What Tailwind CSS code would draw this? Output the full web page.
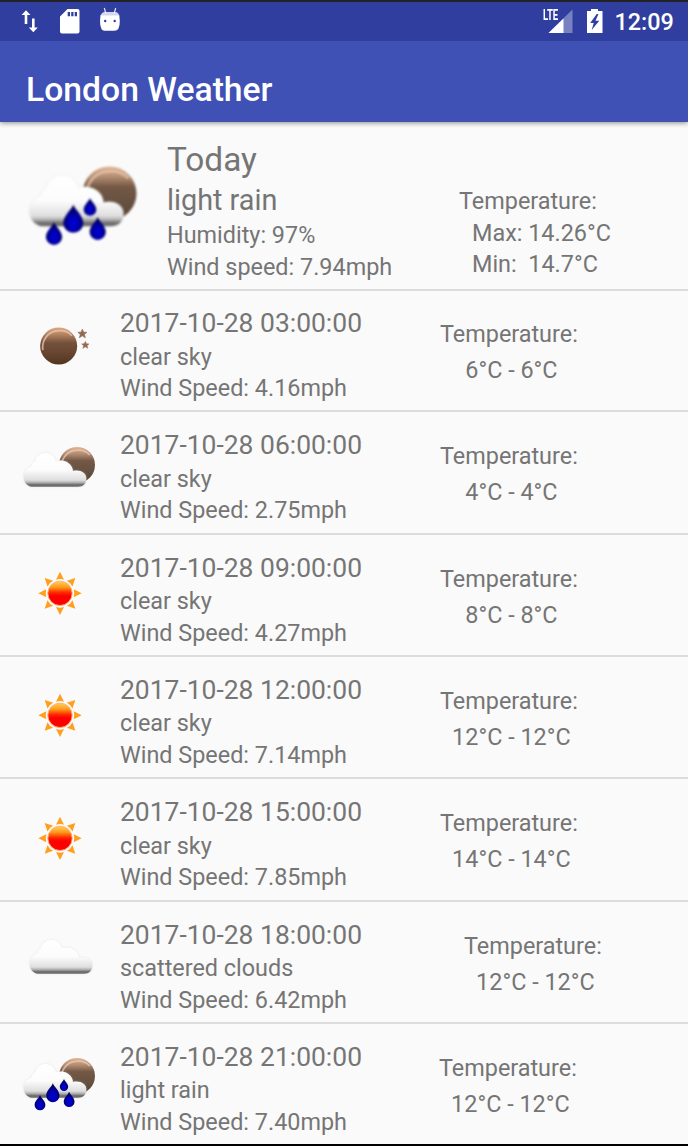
<!DOCTYPE html>
<html lang="en">
<head>
<meta charset="utf-8">
<title>London Weather</title>
<script src="https://cdn.jsdelivr.net/npm/@tailwindcss/browser@4"></script>
</head>
<body class="h-[1146px] w-[688px] overflow-hidden bg-[#fafafa] font-[Roboto,sans-serif] text-[#757575]">
<svg class="absolute size-0">
  <defs>
    <linearGradient id="moonFill" x1="0" y1="0" x2="0" y2="1"><stop offset="0" stop-color="#e0a883"/><stop offset=".2" stop-color="#b08060"/><stop offset=".42" stop-color="#73503a"/><stop offset=".7" stop-color="#674530"/><stop offset="1" stop-color="#51351f"/></linearGradient>
    <linearGradient id="duskFill" x1="0" y1="0" x2="0" y2="1"><stop offset="0" stop-color="#e3b595"/><stop offset=".2" stop-color="#b08b70"/><stop offset=".38" stop-color="#745845"/><stop offset=".7" stop-color="#655040"/><stop offset="1" stop-color="#55402f"/></linearGradient>
    <linearGradient id="cloudFill" gradientUnits="userSpaceOnUse" x1="0" y1="31" x2="0" y2="82.5"><stop offset="0" stop-color="#fff"/><stop offset=".5" stop-color="#fcfcfc"/><stop offset=".8" stop-color="#dedede"/><stop offset=".87" stop-color="#b0b0b0"/><stop offset=".93" stop-color="#707070"/><stop offset="1" stop-color="#686868"/></linearGradient>
    <linearGradient id="sunFill" x1="0" y1="0" x2="0" y2="1"><stop offset="0" stop-color="#ffd060"/><stop offset=".25" stop-color="#ff9a18"/><stop offset=".47" stop-color="#ff2a00"/><stop offset=".6" stop-color="#f00"/></linearGradient>
    <radialGradient id="dropFill" cx=".5" cy=".66" r=".55"><stop offset="0" stop-color="#0000dc"/><stop offset=".45" stop-color="#0000b4"/><stop offset="1" stop-color="#000058"/></radialGradient>
    <filter id="soft" x="-20%" y="-20%" width="140%" height="140%" color-interpolation-filters="sRGB"><feGaussianBlur stdDeviation=".9"/></filter>
    <filter id="halo" x="-20%" y="-20%" width="140%" height="140%" color-interpolation-filters="sRGB"><feGaussianBlur stdDeviation="1.3"/></filter>
    <path id="cloudShape" d="M17 82.3C9 80 5.5 73.500 5.500 67C5.500 60 9.500 54.500 17 51.500C18 47 20 45 23 43C25 35.500 31 31.500 38.500 31.500C46 31.500 50 35 54 43.500C59 42.500 66 42 72 46C77 49.500 79 53 79.500 58.500C90 56 99.500 61 99.500 69.500C99.500 77 95 82.300 87 82.300Z"/>
    <path id="drop" d="M0 0C1.500 5 10 11 10 18.500A10 9.800 0 0 1-10 18.500C-10 11-1.500 5 0 0Z" fill="url(#dropFill)"/>
    <path id="glint" d="M-23 6C-25-8-16-21-2-22C7-23 15-20 19-15" fill="none" stroke="#ecc9b2" stroke-width="2.600" opacity=".75"/>
    <g id="cloud"><use href="#cloudShape" fill="#ccc" opacity=".45" filter="url(#halo)"/><use href="#cloudShape" fill="url(#cloudFill)"/></g>
    <g id="cloudmoon"><g transform="translate(85.500 49.500)"><circle r="27" fill="url(#duskFill)"/><use href="#glint"/></g><use href="#cloud"/></g>
    <path id="star" d="M0-6.500L2-2.200L6.700-2L3 1.200L4.500 6L0 3.300L-4.500 6L-3 1.200L-6.700-2L-2-2.200Z" fill="#936a50" stroke="#936a50"/>
    <path id="ray" d="M0-32.500L6-20.500Q0-22.500-6-20.500Z" fill="#ff9f1c"/>
  </defs>
  <symbol id="i-rain" viewBox="0 0 120 120"><g filter="url(#soft)"><use href="#cloudmoon"/><use href="#drop" transform="translate(49.300 60.500)"/><use href="#drop" transform="translate(66 54) scale(.63)"/><use href="#drop" transform="translate(30 78) scale(.81)"/><use href="#drop" transform="translate(73.700 73) scale(.81)"/></g></symbol>
  <symbol id="i-few" viewBox="0 0 120 120"><g filter="url(#soft)"><use href="#cloudmoon"/></g></symbol>
  <symbol id="i-cloud" viewBox="0 0 120 120"><g filter="url(#soft)"><use href="#cloud" transform="translate(9 -3)"/></g></symbol>
  <symbol id="i-night" viewBox="0 0 120 120"><g filter="url(#soft)"><g transform="translate(58 54) scale(1.030)"><circle r="27" fill="url(#moonFill)"/><use href="#glint"/></g><use href="#star" x="93.500" y="35.500"/><use href="#star" transform="translate(98 52.500) scale(.82)"/></g></symbol>
  <symbol id="i-sun" viewBox="0 0 120 120"><g transform="translate(60 59)"><g filter="url(#soft)"><use href="#ray"/><use href="#ray" transform="rotate(45)"/><use href="#ray" transform="rotate(90)"/><use href="#ray" transform="rotate(135)"/><use href="#ray" transform="rotate(180)"/><use href="#ray" transform="rotate(225)"/><use href="#ray" transform="rotate(270)"/><use href="#ray" transform="rotate(315)"/><circle r="18.300" fill="url(#sunFill)" stroke="#ffb070" stroke-width="1.500"/></g></g></symbol>
</svg>

<div class="flex h-full flex-col border-b-2 border-black">
  <header class="relative z-10 shrink-0 shadow-[0_1px_5px_rgba(0,0,0,0.45)]">
    <div class="flex h-[41px] items-start border-t-2 border-[#222226] bg-[#303f9f] text-white">
      <svg class="h-[39px] w-[140px]" viewBox="0 2 140 39" fill="#fff">
        <path d="M26 10.300L30.500 15H27.300V24H24.700V15H21.500ZM33.300 32.300L28.800 27.500H32V18.500H34.600V27.500H37.800Z"/>
        <path fill-rule="evenodd" d="M67.500 9H77.500Q79.500 9 79.500 11V31.500Q79.500 33.500 77.500 33.500H62Q60 33.500 60 31.500V16.500ZM67.700 12V16.300H70V12ZM71.200 12V16.300H73.500V12ZM74.700 12V16.300H77V12Z"/>
        <path fill-rule="evenodd" d="M100.500 15.200H119.300L119.800 21Q119.800 26 118.500 28.500Q117.500 30.800 114 30.800H106Q102 30.800 101.300 28.500Q100 26 100 21ZM104 21a1.200 1.200 0 1 0 2.400 0a1.200 1.200 0 1 0-2.400 0M113.500 21a1.200 1.200 0 1 0 2.400 0a1.200 1.200 0 1 0-2.400 0"/>
        <path d="M100.500 15.700Q101.500 12.300 105 12H115Q118.500 12.300 119.300 15.700Z" opacity=".8"/>
        <path d="M104.300 8L105.700 13M115.700 8L114.300 13" stroke="#fff" stroke-width="1.200" opacity=".85"/>
      </svg>
      <div class="grow"></div>
      <div class="relative h-[39px] w-[64px]">
        <svg class="size-full" viewBox="540 2 64 39" fill="#fff">
          <path d="M548.500 33L572.500 9.500V33Z" opacity=".35"/><path d="M548.500 33L563.500 18.500V33Z"/><path d="M542 8H560V19L557 21H542Z" fill="#303f9f"/>
          <path fill-rule="evenodd" d="M591 9H598V11H602.500V33H587V11H591ZM596.700 14L590.200 23H593.700L591.700 30L599.300 20.700H595.500L598.500 14Z"/>
        </svg>
        <span class="absolute left-[3px] top-[6px] text-[14.500px] leading-[16px] font-bold tracking-[-0.300px]"><span class="inline-block origin-left scale-x-[.66]">LTE</span></span>
      </div>
      <div class="w-[84px] pl-[10.500px] pt-[4px] text-[23.400px] leading-[32px] font-medium">12:09</div>
    </div>
    <div class="flex h-[81px] items-center bg-[#3f51b5] pl-[26px] pt-[17px] text-[33.700px] font-medium text-white">London Weather</div>
  </header>

  <section class="flex h-[169px] shrink-0 border-b-2 border-[#dcdcdc] pl-6 text-[23.400px] leading-[31.500px]">
    <svg class="mt-[21.500px] size-[120px] shrink-0"><use href="#i-rain"/></svg>
    <div class="w-[315px] shrink-0 pl-[23px] pt-[16px] whitespace-nowrap">
      <div class="text-[33.400px] leading-[43px]">Today</div>
      <div class="text-[28.800px] leading-[39px]">light rain</div>
      <div>Humidity: 97%</div>
      <div>Wind speed: 7.94mph</div>
    </div>
    <div class="pt-[64px]">
      <div>Temperature:</div>
      <div class="pl-[13px]">Max: 14.26°C</div>
      <div class="pl-[13px] whitespace-pre">Min:  14.7°C</div>
    </div>
  </section>
  <main id="list" class="-mt-px shrink-0"></main>
</div>

<script>
const rows = [
  ['night', '03', 'clear sky', '4.16', '6°C - 6°C', 440],
  ['few', '06', 'clear sky', '2.75', '4°C - 4°C', 440],
  ['sun', '09', 'clear sky', '4.27', '8°C - 8°C', 440],
  ['sun', '12', 'clear sky', '7.14', '12°C - 12°C', 440],
  ['sun', '15', 'clear sky', '7.85', '14°C - 14°C', 440],
  ['cloud', '18', 'scattered clouds', '6.42', '12°C - 12°C', 464],
  ['rain', '21', 'light rain', '7.40', '12°C - 12°C', 439],
];
document.getElementById('list').innerHTML = rows.map(([icon, hour, sky, wind, temp, x]) => `
  <section class="flex h-[122.330px] border-b-2 border-[#dcdcdc] pl-5 text-[23.400px] leading-[31.500px] whitespace-nowrap last:border-b-0">
    <svg class="mt-[19.500px] size-[80px] shrink-0"><use href="#i-${icon}"/></svg>
    <div class="shrink-0 pl-5 pt-[15px]" style="width:${x - 100}px">
      <div class="text-[26.450px] leading-[36.500px]">2017-10-28 ${hour}:00:00</div>
      <div>${sky}</div>
      <div>Wind Speed: ${wind}mph</div>
    </div>
    <div class="pt-[26px] text-center leading-[36px]">
      <div>Temperature:</div>
      <div class="pl-[5px]">${temp}</div>
    </div>
  </section>`).join('');
</script>
</body>
</html>
